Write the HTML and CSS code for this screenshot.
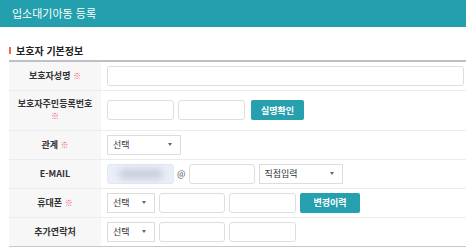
FILE: index.html
```html
<!DOCTYPE html>
<html lang="ko">
<head>
    <meta charset="UTF-8">
    <title>입소대기아동 등록</title>
    <meta name="viewport" content="width=device-width, initial-scale=1.0">
    <link rel="stylesheet" href="styles.css">
</head>
<body>
    <div class="top-bar">입소대기아동 등록</div>

    <h3 class="section-title">보호자 기본정보</h3>

    <table class="form-table">
        <tr class="row">
            <th>보호자성명 <span class="req">※</span></th>
            <td><input type="text" class="inp inp-full"></td>
        </tr>
        <tr class="row row-tall">
            <th>보호자주민등록번호<br><span class="req">※</span></th>
            <td>
                <div class="field">
                    <input type="text" class="inp inp-m">
                    <input type="text" class="inp inp-m">
                    <button type="button" class="btn btn-check">실명확인</button>
                </div>
            </td>
        </tr>
        <tr class="row">
            <th>관계 <span class="req">※</span></th>
            <td>
                <div class="field">
                    <div class="select sel-rel"><span>선택</span><i class="caret"></i></div>
                </div>
            </td>
        </tr>
        <tr class="row">
            <th>E-MAIL</th>
            <td>
                <div class="field">
                    <div class="inp inp-m inp-blur"><span class="blur"></span></div>
                    <span class="at">@</span>
                    <input type="text" class="inp inp-s">
                    <div class="select sel-domain"><span>직접입력</span><i class="caret"></i></div>
                </div>
            </td>
        </tr>
        <tr class="row">
            <th>휴대폰 <span class="req">※</span></th>
            <td>
                <div class="field">
                    <div class="select sel-tel"><span>선택</span><i class="caret"></i></div>
                    <input type="text" class="inp inp-s">
                    <input type="text" class="inp inp-m">
                    <button type="button" class="btn btn-history">변경이력</button>
                </div>
            </td>
        </tr>
        <tr class="row">
            <th>추가연락처</th>
            <td>
                <div class="field">
                    <div class="select sel-tel"><span>선택</span><i class="caret"></i></div>
                    <input type="text" class="inp inp-s">
                    <input type="text" class="inp inp-m">
                </div>
            </td>
        </tr>
    </table>
</body>
</html>
```

FILE: styles.css
```css
body { margin: 0; background: #fff; font-family: "Noto Sans CJK KR", "Noto Sans", sans-serif; color: #333; }

.top-bar { height: 27px; line-height: 27px; padding-left: 12px; background: #249fad; color: #fff; font-size: 11px; }

.section-title { margin: 17px 0 0 9px; height: 13px; line-height: 13px; font-size: 10px; font-weight: bold; color: #222; display: flex; align-items: center; }
.section-title::before { content: ""; width: 2px; height: 7px; background: #f26a4b; margin-right: 5px; }

.form-table { margin: 3px 0 0 9px; width: 457px; border-collapse: collapse; border-top: 2px solid #bfbfc7; border-bottom: 1px solid #c8c8c8; }
.form-table th { width: 92px; padding: 0; background: #f7f7f7; font-size: 9px; font-weight: bold; color: #333; text-align: center; line-height: 12px; }
.form-table td { padding: 0 0 0 6px; }
.row { height: 29px; border-bottom: 1px solid #ececec; }
.row:last-child { border-bottom: none; }
.row-tall { height: 40px; }

.req { color: #f2506a; font-size: 8px; font-weight: bold; }

.field { display: flex; align-items: center; gap: 4px; }

.inp { box-sizing: border-box; height: 20px; border: 1px solid #dedede; border-radius: 3px; background: #fff; padding: 0 4px; font-size: 9px; outline: none; }
.inp-full { display: block; width: 357px; }
.inp-m { width: 67px; }
.inp-s { width: 66px; }
.inp-blur { background: #e9eef8; border-color: #e4e8f0; display: flex; align-items: center; justify-content: center; }
.blur { width: 44px; height: 10px; background: #c9cfdc; border-radius: 5px; filter: blur(3px); }

.at { font-size: 9px; color: #555; margin: 0 -1px 0 -1px; }

.select { box-sizing: border-box; height: 20px; border: 1px solid #dcdcdc; background: #fff; display: flex; align-items: center; justify-content: space-between; padding: 0 8px 0 5px; font-size: 9px; color: #333; }
.caret { width: 0; height: 0; border-left: 2.5px solid transparent; border-right: 2.5px solid transparent; border-top: 3px solid #666; }
.sel-rel { width: 74px; }
.sel-domain { width: 84px; }
.sel-tel { width: 48px; }

.btn { box-sizing: border-box; height: 20px; border: none; border-radius: 2px; background: #26a0ae; color: #fff; font-family: inherit; font-size: 9px; font-weight: bold; padding: 0; cursor: pointer; }
.btn-check { width: 53px; margin-left: 2px; }
.btn-history { width: 60px; }
```
